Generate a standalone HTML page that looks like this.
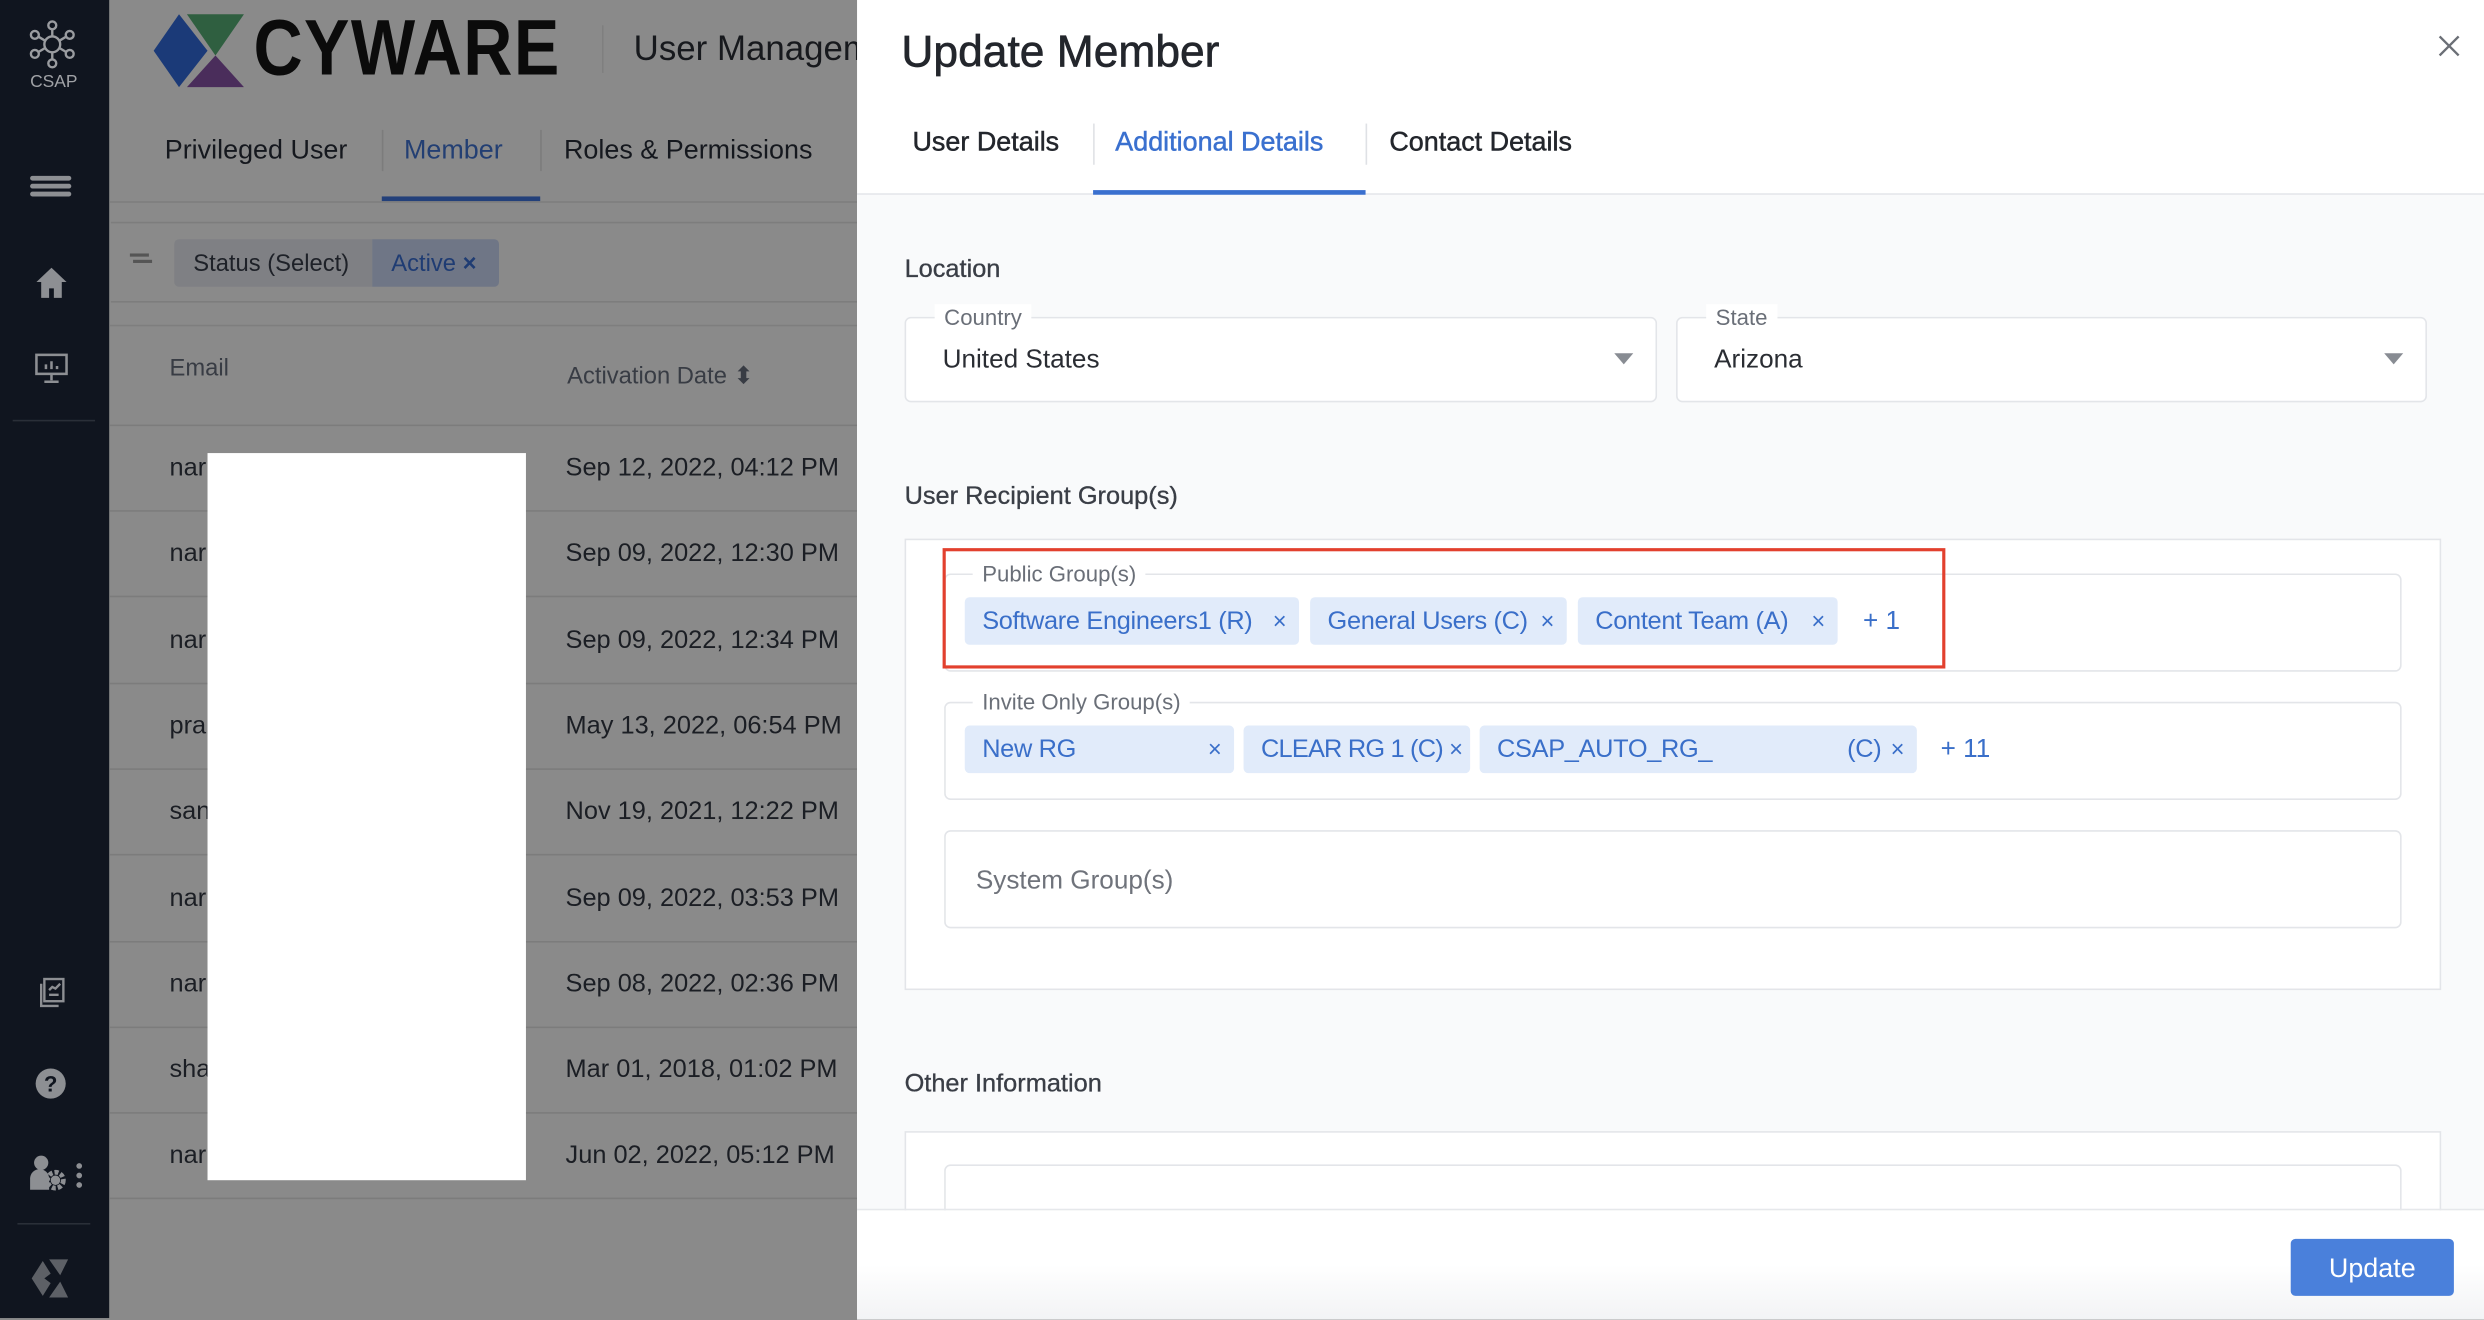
<!DOCTYPE html>
<html><head><meta charset="utf-8">
<style>
html,body{margin:0;padding:0;width:2484px;height:1318px;overflow:hidden;background:#8a8a8a;}
#w{position:absolute;left:0;top:0;width:1568px;height:832px;transform:scale(1.58418);transform-origin:0 0;font-family:"Liberation Sans",sans-serif;}
.a{position:absolute;}
.t{position:absolute;white-space:nowrap;}
.chip{position:absolute;height:30px;background:#e1ebfa;border-radius:3px;color:#3a6fc9;font-size:16px;letter-spacing:-0.2px;line-height:31px;padding-left:11px;box-sizing:border-box;}
.chip .x{position:absolute;right:8px;top:0;color:#3a6fc9;font-size:15px;}
.fld{position:absolute;border:1px solid #e3e5e9;border-radius:4px;box-sizing:border-box;}
.lbl{position:absolute;top:-9px;background:#fff;padding:0 6px;font-size:14px;color:#6a6f78;line-height:16px;}
</style></head><body><div id="w">
<div class="a" style="left:0;top:0;width:69px;height:832px;background:#10151f"></div>
<div class="a" style="left:69px;top:0;width:472px;height:832px;background:#8a8a8a"></div>
<svg class="a" style="left:17px;top:12px" width="32" height="32" viewBox="0 0 32 32" fill="none" stroke="#9a9ca0" stroke-width="1.5"><circle cx="16" cy="16" r="5"/><circle cx="16" cy="4" r="2.5"/><circle cx="16" cy="28" r="2.5"/><circle cx="5" cy="10" r="2.5"/><circle cx="27" cy="10" r="2.5"/><circle cx="5" cy="22" r="2.5"/><circle cx="27" cy="22" r="2.5"/><path d="M16 6v5M16 21v5M7 11l5 3M25 11l-5 3M7 21l5-3M25 21l-5-3"/></svg>
<div class="t" style="left:19px;top:46px;font-size:11px;color:#a0a2a6">CSAP</div>
<div class="a" style="left:19px;top:111px;width:26px;height:3px;background:#8d8f93;border-radius:2px;box-shadow:0 5px 0 #8d8f93,0 10px 0 #8d8f93"></div>
<svg class="a" style="left:22px;top:168px" width="21" height="21" viewBox="0 0 21 21"><path d="M10.5 1L1 10h3v10h5v-6h3v6h5V10h3z" fill="#8d8f93"/></svg>
<svg class="a" style="left:22px;top:223px" width="21" height="19" viewBox="0 0 21 19" fill="none" stroke="#8d8f93" stroke-width="1.6"><rect x="1" y="1" width="19" height="12"/><path d="M10.5 13v4M6 18h9M7 10V7M10.5 10V5M14 10V8"/></svg>
<div class="a" style="left:8px;top:265px;width:52px;height:1px;background:#2a2f38"></div>
<svg class="a" style="left:24px;top:617px" width="18" height="19" viewBox="0 0 18 19" fill="none" stroke="#8d8f93" stroke-width="1.5"><rect x="4" y="1" width="12" height="14"/><path d="M2 4v14h11M7 11h6M7 8l2-2 2 1 3-3"/></svg>
<svg class="a" style="left:22px;top:674px" width="20" height="20" viewBox="0 0 20 20"><circle cx="10" cy="10" r="9.5" fill="#8d8f93"/><text x="10" y="15" font-size="14" font-weight="bold" text-anchor="middle" fill="#10151f" font-family="Liberation Sans">?</text></svg>
<svg class="a" style="left:18px;top:729px" width="38" height="24" viewBox="0 0 38 24" fill="#8d8f93"><circle cx="8" cy="5" r="4.5"/><path d="M1 22v-7a6 6 0 0 1 12 0v7z"/><circle cx="17" cy="16" r="5" fill="none" stroke="#8d8f93" stroke-width="3" stroke-dasharray="2.5 1.3"/><circle cx="17" cy="16" r="3"/><circle cx="32" cy="7" r="1.8"/><circle cx="32" cy="13" r="1.8"/><circle cx="32" cy="19" r="1.8"/></svg>
<div class="a" style="left:11px;top:772px;width:46px;height:1px;background:#2a2f38"></div>
<svg class="a" style="left:19px;top:794px" width="26" height="26" viewBox="0 0 26 26" fill="#5d6066"><path d="M8 2L1 13l7 11 5-8-4-3 4-3z"/><path d="M12 1h12l-5 10zM19 15l5 10H12z"/></svg>
<svg class="a" style="left:96px;top:7px" width="58" height="50" viewBox="0 0 58 50"><path d="M17 2L1 25l16 23 18-23z" fill="#1b3a78"/><path d="M22 2h36L40 28z" fill="#2f5f40"/><path d="M40 28L58 48H22z" fill="#4a2d5b"/></svg>
<div class="t" style="left:160px;top:2px;font-size:50px;font-weight:bold;color:#0b0b0b;letter-spacing:1px;line-height:56px;transform:scaleX(0.86);transform-origin:0 0">CYWARE</div>
<div class="a" style="left:380px;top:16px;width:1px;height:30px;background:#7f7f7f"></div>
<div class="t" style="left:400px;top:18px;font-size:22px;color:#17191d">User Managem</div>
<div class="t" style="left:104px;top:85px;font-size:17px;color:#15181e">Privileged User</div>
<div class="a" style="left:241px;top:82px;width:1px;height:26px;background:#7c7c7c"></div>
<div class="t" style="left:255px;top:85px;font-size:17px;color:#233f73">Member</div>
<div class="a" style="left:341px;top:82px;width:1px;height:26px;background:#7c7c7c"></div>
<div class="t" style="left:356px;top:85px;font-size:17px;color:#15181e">Roles &amp; Permissions</div>
<div class="a" style="left:241px;top:124px;width:100px;height:3px;background:#23407a"></div>
<div class="a" style="left:69px;top:127px;width:472px;height:1px;background:#7e7e7e"></div>
<div class="a" style="left:70px;top:140px;width:471px;height:51px;border-top:1px solid #7d7d7d;border-bottom:1px solid #7d7d7d;box-sizing:border-box"></div>
<div class="a" style="left:82px;top:160px;width:12px;height:2px;background:#555;box-shadow:2px 4px 0 -0px #555"></div>
<div class="a" style="left:110px;top:151px;width:125px;height:30px;background:#7f8084;border-radius:3px 0 0 3px"></div>
<div class="t" style="left:122px;top:158px;font-size:15px;color:#1e2128">Status (Select)</div>
<div class="a" style="left:235px;top:151px;width:80px;height:30px;background:#6f7686;border-radius:0 3px 3px 0"></div>
<div class="t" style="left:247px;top:158px;font-size:15px;color:#1f3c73">Active <b>×</b></div>
<div class="a" style="left:69px;top:205px;width:472px;height:1px;background:#7e7e7e"></div>
<div class="t" style="left:107px;top:224px;font-size:15px;color:#383c44">Email</div>
<div class="t" style="left:358px;top:228px;font-size:15px;color:#383c44">Activation Date ⬍</div>
<div class="a" style="left:69px;top:268px;width:472px;height:1px;background:#7c7c7c"></div>
<div id="rows"></div>
<div class="a" style="left:131px;top:286px;width:201px;height:459px;background:#fff"></div>
<div class="a" style="left:541px;top:0;width:1027px;height:832px;background:#fff"></div>
<div class="t" style="left:569px;top:17px;font-size:28px;color:#23262c;-webkit-text-stroke:0.4px #23262c">Update Member</div>
<svg class="a" style="left:1539px;top:22px" width="14" height="14" viewBox="0 0 14 14" stroke="#6b6f76" stroke-width="1.5"><path d="M1 1l12 12M13 1L1 13"/></svg>
<div class="t" style="left:576px;top:80px;font-size:17px;color:#23262c;-webkit-text-stroke:0.3px #23262c">User Details</div>
<div class="a" style="left:690px;top:78px;width:1px;height:26px;background:#dfe1e5"></div>
<div class="t" style="left:704px;top:80px;font-size:17px;color:#3a70cf;-webkit-text-stroke:0.3px #3a70cf">Additional Details</div>
<div class="a" style="left:862px;top:78px;width:1px;height:26px;background:#dfe1e5"></div>
<div class="t" style="left:877px;top:80px;font-size:17px;color:#23262c;-webkit-text-stroke:0.3px #23262c">Contact Details</div>
<div class="a" style="left:541px;top:122px;width:1027px;height:1px;background:#e3e5e9"></div>
<div class="a" style="left:690px;top:120px;width:172px;height:3px;background:#3a70cf"></div>
<div class="a" style="left:541px;top:123px;width:1027px;height:640px;background:#f9fafb"></div>
<div class="t" style="left:571px;top:162px;font-size:16px;color:#3a3e46;-webkit-text-stroke:0.2px #3a3e46">Location</div>
<div class="fld" style="left:571px;top:200px;width:475px;height:54px;background:#fff"><div class="lbl" style="left:18px">Country</div><div class="t" style="left:23px;top:17px;font-size:16.5px;color:#2a2d33">United States</div><div class="a" style="right:14px;top:22px;border:6px solid transparent;border-top:7px solid #888c93"></div></div>
<div class="fld" style="left:1058px;top:200px;width:474px;height:54px;background:#fff"><div class="lbl" style="left:18px">State</div><div class="t" style="left:23px;top:17px;font-size:16.5px;color:#2a2d33">Arizona</div><div class="a" style="right:14px;top:22px;border:6px solid transparent;border-top:7px solid #888c93"></div></div>
<div class="t" style="left:571px;top:305px;font-size:16px;color:#3a3e46;-webkit-text-stroke:0.2px #3a3e46">User Recipient Group(s)</div>
<div class="a" style="left:571px;top:340px;width:970px;height:285px;background:#fff;border:1px solid #e3e5e9;box-sizing:border-box"></div>
<div class="fld" style="left:596px;top:362px;width:920px;height:62px"><div class="lbl" style="left:17px">Public Group(s)</div></div>
<div class="chip" style="left:609px;top:377px;width:211px">Software Engineers1 (R)<span class="x">×</span></div>
<div class="chip" style="left:827px;top:377px;width:162px">General Users (C)<span class="x">×</span></div>
<div class="chip" style="left:996px;top:377px;width:164px">Content Team (A)<span class="x">×</span></div>
<div class="t" style="left:1176px;top:383px;font-size:16.5px;color:#3a6fc9">+ 1</div>
<div class="a" style="left:595px;top:346px;width:633px;height:76px;border:2px solid #e2402e;box-sizing:border-box"></div>
<div class="fld" style="left:596px;top:443px;width:920px;height:62px"><div class="lbl" style="left:17px">Invite Only Group(s)</div></div>
<div class="chip" style="left:609px;top:458px;width:170px">New RG<span class="x">×</span></div>
<div class="chip" style="left:785px;top:458px;width:143px;letter-spacing:-0.5px">CLEAR RG 1 (C)<span class="x" style="right:5px">×</span></div>
<div class="chip" style="left:934px;top:458px;width:276px">CSAP_AUTO_RG_<span style="position:absolute;left:232px">(C)</span><span class="x">×</span></div>
<div class="t" style="left:1225px;top:464px;font-size:16.5px;color:#3a6fc9">+ 11</div>
<div class="fld" style="left:596px;top:524px;width:920px;height:62px"><div class="t" style="left:19px;top:22px;font-size:16.5px;color:#6f737b">System Group(s)</div></div>
<div class="t" style="left:571px;top:676px;font-size:16px;color:#3a3e46;-webkit-text-stroke:0.2px #3a3e46">Other Information</div>
<div class="a" style="left:571px;top:714px;width:970px;height:60px;background:#fff;border:1px solid #e3e5e9;box-sizing:border-box"></div>
<div class="a" style="left:596px;top:735px;width:920px;height:40px;border:1px solid #e3e5e9;border-radius:4px 4px 0 0;box-sizing:border-box"></div>
<div class="a" style="left:541px;top:763px;width:1027px;height:69px;background:linear-gradient(#fff 50%,#f2f3f5);border-top:1px solid #e6e8eb"></div>
<div class="a" style="left:1446px;top:782px;width:103px;height:36px;background:#4a80db;border-radius:3px;color:#fff;font-size:17px;line-height:37px;text-align:center">Update</div>
</div>
<script>
var r=document.getElementById('rows'),d=[["nar","Sep 12, 2022, 04:12 PM"],["nar","Sep 09, 2022, 12:30 PM"],["nar","Sep 09, 2022, 12:34 PM"],["pra","May 13, 2022, 06:54 PM"],["san","Nov 19, 2021, 12:22 PM"],["nar","Sep 09, 2022, 03:53 PM"],["nar","Sep 08, 2022, 02:36 PM"],["sha","Mar 01, 2018, 01:02 PM"],["nar","Jun 02, 2022, 05:12 PM"]],h='';
for(var i=0;i<9;i++){var y=268+i*54.3;h+='<div class="t" style="left:107px;top:'+(y+19)+'px;font-size:16px;color:#1b1e24">'+d[i][0]+'</div><div class="t" style="left:357px;top:'+(y+19)+'px;font-size:16px;color:#1b1e24">'+d[i][1]+'</div><div class="a" style="left:69px;top:'+(y+54)+'px;width:472px;height:1px;background:#7c7c7c"></div>';}
r.outerHTML=h;
</script>
</body></html>
